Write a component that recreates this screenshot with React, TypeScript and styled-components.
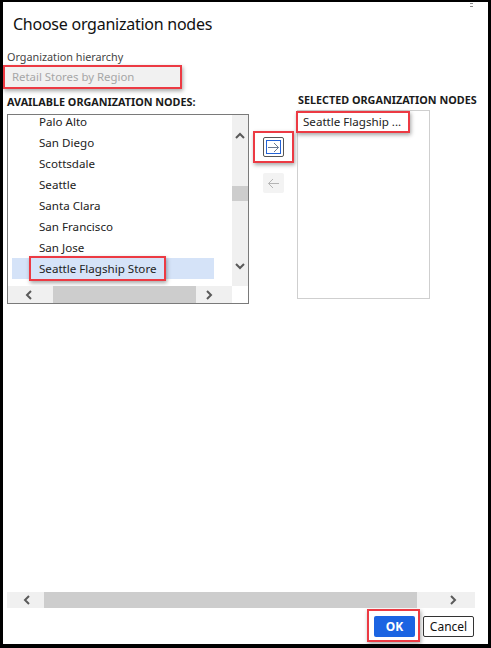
import React from "react";
import styled, { createGlobalStyle } from "styled-components";

const Global = createGlobalStyle`
  html, body { margin: 0; padding: 0; background: #fff; }
  body { font-family: "Noto Sans", "Open Sans", sans-serif; }
  * { box-sizing: border-box; }
`;

const RED = "#ec3a43";
const annot = `border: 2px solid ${RED}; box-shadow: 1px 2px 4px rgba(0,0,0,0.35);`;

const Frame = styled.div`
  position: relative;
  width: 491px;
  height: 648px;
  border-style: solid;
  border-color: #000;
  border-width: 2px 3px 4px 3px;
  background: #fff;
  display: flex;
  flex-direction: column;
  color: #222;
`;

const CornerDots = styled.div`
  position: absolute;
  top: 1px;
  right: 15px;
  width: 3px;
  height: 4px;
  border-top: 1px solid #888;
  border-bottom: 1px solid #888;
`;

const Title = styled.h1`
  margin: 0;
  padding: 10px 0 0 10px;
  font-size: 16px;
  letter-spacing: -0.25px;
  font-weight: 400;
  line-height: 24px;
  color: #111;
`;

const FieldLabel = styled.div`
  margin: 14px 0 0 4px;
  font-size: 10.8px;
  line-height: 14px;
  color: #444;
`;

const HierarchyInput = styled.div`
  margin-top: 1px;
  width: 179px;
  height: 24px;
  ${annot}
  background: #f1f1f1;
  padding-left: 7px;
  font-size: 11.4px;
  line-height: 20px;
  color: #a6a6a6;
`;

const Columns = styled.div`
  display: grid;
  grid-template-columns: 242px 41px auto;
  column-gap: 4px;
  padding-left: 4px;
  margin-top: 4px;
  align-items: start;
`;

const Column = styled.div<{ $shift?: number; $gap: number }>`
  display: flex;
  flex-direction: column;
  gap: ${(p) => p.$gap}px;
  margin-top: ${(p) => p.$shift ?? 0}px;
`;

const Heading = styled.div`
  font-size: 10.8px;
  font-weight: 700;
  line-height: 14px;
  color: #1a1a1a;
  white-space: nowrap;
`;

const ListBox = styled.div`
  width: 242px;
  height: 190px;
  border: 1px solid #7a7a7a;
  display: grid;
  grid-template-columns: 1fr 16px;
  grid-template-rows: 1fr 17px;
  overflow: hidden;
`;

const Items = styled.div`
  overflow: hidden;
  padding: 0 0 0 4px;
`;

const Item = styled.div<{ $selected?: boolean; $clip?: boolean }>`
  width: 202px;
  height: 21px;
  padding-left: 27px;
  font-size: 11.6px;
  line-height: 21px;
  color: #222;
  background: ${(p) => (p.$selected ? "#d5e3f8" : "transparent")};
  margin-top: ${(p) => (p.$clip ? -4 : 0)}px;
`;

const SelectedText = styled.span`
  display: inline-block;
  margin-left: -10px;
  padding: 0 8px 0 8px;
  height: 25px;
  line-height: 21px;
  margin-top: -2px;
  ${annot}
`;

const VScroll = styled.div`
  background: #f0f0f0;
  display: flex;
  flex-direction: column;
  align-items: center;
  position: relative;
`;

const VThumb = styled.div`
  position: absolute;
  left: 0;
  right: 0;
  top: 71px;
  height: 15px;
  background: #cdcdcd;
`;

const Arrow = styled.svg<{ $color?: string }>`
  display: block;
  flex: none;
  color: ${(p) => p.$color ?? "#606060"};
`;

const HScroll = styled.div`
  grid-column: 1 / 2;
  background: #f0f0f0;
  display: flex;
  align-items: center;
  position: relative;
`;

const HThumb = styled.div<{ $left: number; $width: number }>`
  position: absolute;
  top: 0;
  bottom: 0;
  left: ${(p) => p.$left}px;
  width: ${(p) => p.$width}px;
  background: #cdcdcd;
`;

const Corner = styled.div`
  background: #fff;
`;

const Spacer = styled.div<{ $size?: number }>`
  flex: ${(p) => (p.$size != null ? `0 0 ${p.$size}px` : "1")};
`;

const Mover = styled.div`
  display: flex;
  flex-direction: column;
  align-items: center;
  padding-top: 38px;
  gap: 10px;
`;

const MoverFocus = styled.div`
  width: 41px;
  height: 32px;
  ${annot}
  display: flex;
  align-items: center;
  justify-content: center;
`;

const MoveButton = styled.div<{ $disabled?: boolean }>`
  width: 21px;
  height: 20px;
  display: flex;
  align-items: center;
  justify-content: center;
  border-radius: 2px;
  ${(p) =>
    p.$disabled
      ? "background: #f3f3f3;"
      : "border: 1px solid #555; background: #fff;"}
`;

const FocusRing = styled.div`
  width: 15px;
  height: 14px;
  border: 1px solid #2463d6;
  display: flex;
  align-items: center;
  justify-content: center;
`;

const SelectedBox = styled.div`
  width: 133px;
  height: 189px;
  border: 1px solid #cfcfcf;
  margin-left: -1px;
  position: relative;
`;

const ChosenItem = styled.div`
  position: absolute;
  top: 0px;
  left: -2px;
  width: 114px;
  height: 22px;
  ${annot}
  padding-left: 5px;
  font-size: 11.6px;
  line-height: 18px;
  white-space: nowrap;
  overflow: hidden;
  color: #222;
`;

const PageScroll = styled.div`
  margin-left: 4px;
  width: 468px;
  height: 16px;
  background: #f0f0f0;
  display: flex;
  align-items: center;
  justify-content: space-between;
  padding: 0 16px 0 15px;
  position: relative;
`;

const Footer = styled.div`
  display: flex;
  justify-content: flex-end;
  align-items: flex-end;
  gap: 8px;
  padding: 8px 14px 7px 0;
`;

const OkFocus = styled.div`
  ${annot}
  padding: 5px 3px 3px 5px;
  margin: -7px -5px -5px -7px;
  display: flex;
`;

const Button = styled.button<{ $primary?: boolean }>`
  height: 21px;
  border-radius: 2px;
  font-family: "Noto Sans", "Open Sans", sans-serif;
  font-size: 12px;
  padding: 0;
  cursor: pointer;
  ${(p) =>
    p.$primary
      ? "width: 41px; background: #1b64e2; color: #fff; border: none; font-weight: 700;"
      : "width: 51px; background: #fff; color: #111; border: 1px solid #333;"}
`;

const Chevron = ({ dir, color = "#5a5a5a" }: { dir: "up" | "down" | "left" | "right"; color?: string }) => {
  const d = {
    up: "M2 7 L6 3 L10 7",
    down: "M2 4 L6 8 L10 4",
    left: "M7 2 L3 6 L7 10",
    right: "M4 2 L8 6 L4 10",
  }[dir];
  return (
    <Arrow width="12" height="12" viewBox="0 0 12 12" $color={color}>
      <path d={d} fill="none" stroke="currentColor" strokeWidth="2" />
    </Arrow>
  );
};

const LineArrow = ({ dir, color }: { dir: "left" | "right"; color: string }) => (
  <Arrow width="13" height="11" viewBox="0 0 13 11" $color={color}>
    {dir === "right" ? (
      <path d="M1 5.5 H11.5 M7 1 L11.5 5.5 L7 10" fill="none" stroke="currentColor" strokeWidth="1" />
    ) : (
      <path d="M12 5.5 H1.5 M6 1 L1.5 5.5 L6 10" fill="none" stroke="currentColor" strokeWidth="1" />
    )}
  </Arrow>
);

const nodes = ["Palo Alto", "San Diego", "Scottsdale", "Seattle", "Santa Clara", "San Francisco", "San Jose"];

export default function App() {
  return (
    <>
      <Global />
      <Frame>
        <CornerDots />
        <Title>Choose organization nodes</Title>
        <FieldLabel>Organization hierarchy</FieldLabel>
        <HierarchyInput>Retail Stores by Region</HierarchyInput>
        <Columns>
          <Column $shift={2} $gap={5}>
            <Heading>AVAILABLE ORGANIZATION NODES:</Heading>
            <ListBox>
              <Items>
                {nodes.map((n, i) => (
                  <Item key={n} $clip={i === 0}>
                    {n}
                  </Item>
                ))}
                <Item $selected>
                  <SelectedText>Seattle Flagship Store</SelectedText>
                </Item>
                <Item>Spokane</Item>
              </Items>
              <VScroll>
                <Spacer $size={16} />
                <Chevron dir="up" />
                <VThumb />
                <Spacer />
                <Chevron dir="down" />
                <Spacer $size={14} />
              </VScroll>
              <HScroll>
                <HThumb $left={45} $width={143} />
                <Spacer $size={16} />
                <Chevron dir="left" />
                <Spacer />
                <Chevron dir="right" />
                <Spacer $size={17} />
              </HScroll>
              <Corner />
            </ListBox>
          </Column>
          <Mover>
            <MoverFocus>
              <MoveButton>
                <FocusRing>
                  <LineArrow dir="right" color="#6b7a90" />
                </FocusRing>
              </MoveButton>
            </MoverFocus>
            <MoveButton $disabled>
              <LineArrow dir="left" color="#b4b4b4" />
            </MoveButton>
          </Mover>
          <Column $gap={3}>
            <Heading>SELECTED ORGANIZATION NODES</Heading>
            <SelectedBox>
              <ChosenItem>Seattle Flagship ...</ChosenItem>
            </SelectedBox>
          </Column>
        </Columns>
        <Spacer />
        <PageScroll>
          <HThumb $left={37} $width={373} />
          <Chevron dir="left" />
          <Chevron dir="right" />
        </PageScroll>
        <Footer>
          <OkFocus>
            <Button $primary>OK</Button>
          </OkFocus>
          <Button>Cancel</Button>
        </Footer>
      </Frame>
    </>
  );
}
